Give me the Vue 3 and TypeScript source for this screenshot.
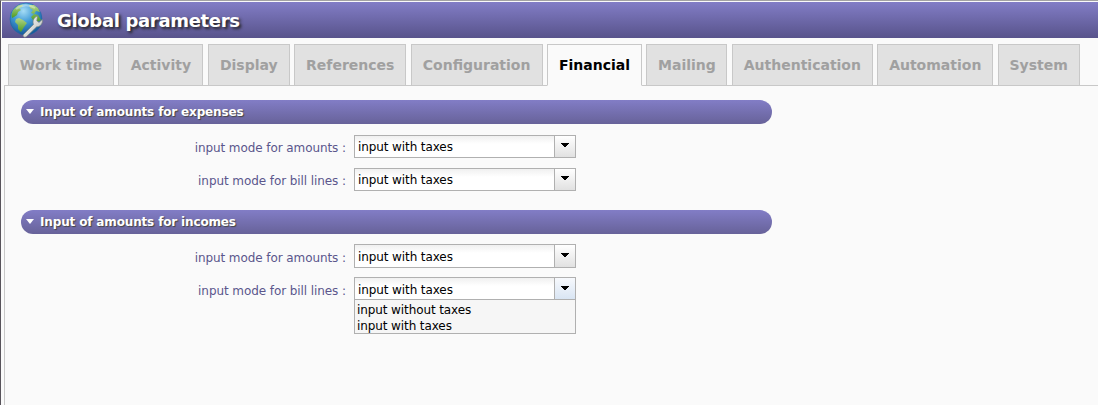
<script setup lang="ts">
interface Tab { name: string; slug: string }
interface Field { label: string; value: string; options?: string[] }
interface Section { title: string; slug: string; fields: Field[] }

const tabs: Tab[] = [
  'Work time', 'Activity', 'Display', 'References', 'Configuration',
  'Financial', 'Mailing', 'Authentication', 'Automation', 'System',
].map((name) => ({ name, slug: name.toLowerCase().replace(' ', '-') }))
const active = 'Financial'

const sections: Section[] = [
  {
    title: 'Input of amounts for expenses',
    slug: 'expenses',
    fields: [
      { label: 'input mode for amounts :', value: 'input with taxes' },
      { label: 'input mode for bill lines :', value: 'input with taxes' },
    ],
  },
  {
    title: 'Input of amounts for incomes',
    slug: 'incomes',
    fields: [
      { label: 'input mode for amounts :', value: 'input with taxes' },
      { label: 'input mode for bill lines :', value: 'input with taxes', options: ['input without taxes', 'input with taxes'] },
    ],
  },
]
</script>

<template>
  <div class="window">
    <header class="title-bar">
      <svg class="globe" viewBox="0 0 36 36" width="36" height="36">
        <defs>
          <radialGradient id="sea" cx="0.42" cy="0.25" r="0.8">
            <stop offset="0" stop-color="#a5dcf5" />
            <stop offset="0.45" stop-color="#3f9ad6" />
            <stop offset="1" stop-color="#114f8e" />
          </radialGradient>
          <linearGradient id="land" x1="0" y1="0" x2="0" y2="1">
            <stop offset="0" stop-color="#b3d58a" />
            <stop offset="1" stop-color="#4d9a22" />
          </linearGradient>
          <linearGradient id="steel" x1="0" y1="0" x2="1" y2="1">
            <stop offset="0" stop-color="#ffffff" />
            <stop offset="1" stop-color="#b4b8b4" />
          </linearGradient>
        </defs>
        <circle cx="17" cy="17" r="16" fill="url(#sea)" stroke="#1d66a5" stroke-width="0.6" />
        <path d="M2.5 13 4 8 9 3.5 14 2.5 13 5 10 6 12 8 9 10 8 13 5 15 3 16Z" fill="url(#land)" />
        <path d="M7 17 10 16 14 18 18 21 15 25 12 30 9 27 9 23 6 20Z" fill="url(#land)" />
        <path d="M20 3 25 3 29 6 31 10 27 9 25 12 22 11 24 8 21 6ZM25 12 29 13 32 18 28 20 24 18 22 15Z" fill="url(#land)" />
        <path d="M14.5 32.5 24.5 22.5C23.5 19.5 24 17 27 14.5L28.5 14.2 27.8 18.8 30 20.4 33.3 17.5C34.2 21 31.5 24.8 27.7 24.8L17.5 34.6C15.5 36 13.2 34.5 14.5 32.5Z" fill="url(#steel)" stroke="#7b8581" stroke-width="0.7" />
        <path d="M7 7Q16 0 26 6" fill="none" stroke="#fff" stroke-opacity="0.35" stroke-width="2" />
      </svg>
      <h1>Global parameters</h1>
    </header>
    <nav class="tabs">
      <div v-for="t in tabs" :key="t.slug" class="tab" :class="[t.slug, { active: t.name === active }]">{{ t.name }}</div>
    </nav>
    <main class="panel">
      <section v-for="s in sections" :key="s.slug" :class="s.slug">
        <h2><svg width="8" height="5" viewBox="0 0 8 5"><path d="M0 0H8L4 5Z" fill="#fff" /></svg><span>{{ s.title }}</span></h2>
        <div v-for="f in s.fields" :key="f.label" class="row">
          <label>{{ f.label }}</label>
          <div class="select" :class="{ open: f.options }">
            <span class="value">{{ f.value }}</span>
            <span class="arrow"><svg width="8" height="5" viewBox="0 0 8 5"><path d="M0 0H8V1H7V2H6V3H5V4H3V3H2V2H1V1H0Z" fill="#000" /></svg></span>
            <ul v-if="f.options" class="menu"><li v-for="o in f.options" :key="o">{{ o }}</li></ul>
          </div>
        </div>
      </section>
    </main>
  </div>
</template>

<style>
body { margin: 0; overflow: hidden; background: #fafafa; }
</style>

<style scoped>
* { box-sizing: border-box; }
.window {
  height: 405px;
  border-top: 1px solid #a2a2a2;
  border-left: 1px solid #57535a;
  display: flex;
  flex-direction: column;
  font-family: "DejaVu Sans", Verdana, sans-serif;
  background: #fafafa;
}
.title-bar {
  flex: none;
  height: 36px;
  margin: 1px 0 0 1px;
  padding-left: 7px;
  display: flex;
  background: linear-gradient(#827dc6, #58538b);
}
.globe { flex: none; }
h1 {
  margin: 0 0 0 12px;
  font-size: 18px;
  line-height: 37px;
  letter-spacing: -0.33px;
  color: #fff;
  text-shadow: 2px 2px 3px #222;
  white-space: nowrap;
}
.tabs {
  flex: none;
  height: 42px;
  margin: 6px 0 -1px 7px;
  display: grid;
  grid-template-columns: 106px 85px 82px 112px 132px 95px 81px 141px 116px 82px;
  column-gap: 4.42px;
  position: relative;
}
.tab {
  border: 1px solid #c8c8c8;
  background: #e1e1e1;
  color: #a0a0a0;
  font-size: 14px;
  font-weight: bold;
  line-height: 40px;
  text-align: center;
  white-space: nowrap;
}
.active { background: #fafafa; border-bottom-color: #fafafa; color: #000; }
.work-time { letter-spacing: 0.12px; }
.panel {
  flex: 1;
  margin-left: 3px;
  padding: 14px 0 0 16px;
  border-top: 1px solid #c8c8c8;
  border-left: 1px solid #c8c8c8;
}
h2 {
  width: 751px;
  height: 24px;
  margin: 0 0 11px;
  padding-left: 5px;
  border-radius: 12px;
  display: flex;
  align-items: center;
  gap: 6px;
  background: linear-gradient(#827dc6, #676299);
  color: #fff;
  font-size: 12px;
  letter-spacing: -0.15px;
  text-shadow: 1px 1px 1px #444;
}
h2 svg { margin-bottom: 1px; }
.incomes h2 { margin: 19px 0 10px; }
.row { display: flex; height: 23px; margin-bottom: 10px; font-size: 12px; }
label {
  width: 325px;
  margin-right: 8px;
  text-align: right;
  line-height: 27px;
  letter-spacing: -0.08px;
  color: #5b568c;
  white-space: nowrap;
}
.select {
  width: 222px;
  height: 23px;
  display: flex;
  position: relative;
  border: 1px solid #b0b0b0;
  background: linear-gradient(#f0f0f0, #fff 8px);
  color: #000;
}
.incomes .row:nth-of-type(1) .select { height: 24px; }
.value { flex: 1; padding-left: 3px; line-height: 23px; letter-spacing: -0.1px; }
.incomes label { line-height: 29px; }
.incomes .value { line-height: 25px; }
.arrow {
  width: 21px;
  border-left: 1px solid #b0b0b0;
  display: flex;
  justify-content: center;
  padding-top: 7px;
  background: linear-gradient(#fff, #e1e1e1);
}
.incomes .arrow { padding-top: 8px; }
.open .arrow { background: linear-gradient(#f7f9fd, #d9e5f3); }
.menu {
  position: absolute;
  top: 21px;
  left: -1px;
  width: 222px;
  height: 35px;
  margin: 0;
  padding: 2px 2px 0;
  list-style: none;
  line-height: 16px;
  letter-spacing: -0.1px;
  border: 1px solid #b0b0b0;
  background: #f6f6f6;
}
</style>
